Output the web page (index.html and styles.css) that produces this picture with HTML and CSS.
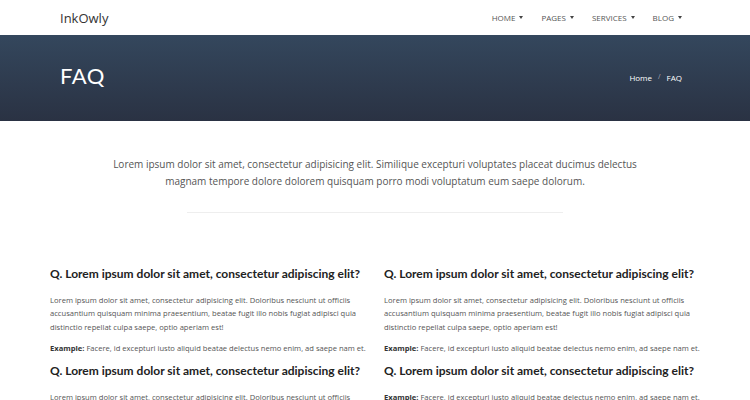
FILE: index.html
```html
<!DOCTYPE html>
<html>
<head>
<meta charset="utf-8">
<link rel="stylesheet" href="styles.css">
</head>
<body>
<header class="navbar">
  <div class="brand">InkOwly</div>
  <nav class="menu">
    <span class="menu-item">HOME <i class="caret"></i></span>
    <span class="menu-item">PAGES <i class="caret"></i></span>
    <span class="menu-item">SERVICES <i class="caret"></i></span>
    <span class="menu-item">BLOG <i class="caret"></i></span>
  </nav>
</header>
<section class="banner">
  <h1 class="banner-title">FAQ</h1>
  <div class="crumbs"><span>Home</span><span class="sep">/</span><span>FAQ</span></div>
</section>
<section class="intro">
  <p class="intro-text">Lorem ipsum dolor sit amet, consectetur adipisicing elit. Similique excepturi voluptates placeat ducimus delectus magnam tempore dolore dolorem quisquam porro modi voluptatum eum saepe dolorum.</p>
  <hr class="divider">
</section>
<section class="faq">
  <div class="col">
    <div class="item">
      <h3 class="q">Q. Lorem ipsum dolor sit amet, consectetur adipiscing elit?</h3>
      <p class="a">Lorem ipsum dolor sit amet, consectetur adipisicing elit. Doloribus nesciunt ut officiis accusantium quisquam minima praesentium, beatae fugit illo nobis fugiat adipisci quia distinctio repellat culpa saepe, optio aperiam est!</p>
      <p class="a"><b>Example:</b> Facere, id excepturi iusto aliquid beatae delectus nemo enim, ad saepe nam et.</p>
    </div>
    <div class="item">
      <h3 class="q">Q. Lorem ipsum dolor sit amet, consectetur adipiscing elit?</h3>
      <p class="a">Lorem ipsum dolor sit amet, consectetur adipisicing elit. Doloribus nesciunt ut officiis accusantium quisquam minima praesentium, beatae fugit illo nobis fugiat adipisci quia distinctio repellat culpa saepe, optio aperiam est!</p>
    </div>
  </div>
  <div class="col">
    <div class="item">
      <h3 class="q">Q. Lorem ipsum dolor sit amet, consectetur adipiscing elit?</h3>
      <p class="a">Lorem ipsum dolor sit amet, consectetur adipisicing elit. Doloribus nesciunt ut officiis accusantium quisquam minima praesentium, beatae fugit illo nobis fugiat adipisci quia distinctio repellat culpa saepe, optio aperiam est!</p>
      <p class="a"><b>Example:</b> Facere, id excepturi iusto aliquid beatae delectus nemo enim, ad saepe nam et.</p>
    </div>
    <div class="item">
      <h3 class="q">Q. Lorem ipsum dolor sit amet, consectetur adipiscing elit?</h3>
      <p class="a"><b>Example:</b> Facere, id excepturi iusto aliquid beatae delectus nemo enim, ad saepe nam et.</p>
    </div>
  </div>
</section>
</body>
</html>
```
FILE: styles.css
```css
* { box-sizing: border-box; }
html, body { margin: 0; padding: 0; }
body {
  font-family: "Open Sans", "Liberation Sans", sans-serif;
  color: #555;
  background: #fff;
  width: 750px;
  overflow: hidden;
}
.navbar {
  height: 35px;
  display: flex;
  align-items: center;
  justify-content: space-between;
  padding: 0 60px 0 60px;
}
.brand {
  font-size: 13px;
  color: #333;
}
.menu {
  display: flex;
  gap: 18px;
  margin-right: 8px;
}
.menu-item {
  font-size: 8px;
  color: #555;
  display: flex;
  align-items: center;
  gap: 4px;
}
.caret {
  display: inline-block;
  width: 0;
  height: 0;
  border-left: 2.5px solid transparent;
  border-right: 2.5px solid transparent;
  border-top: 3px solid #444;
}
.banner {
  height: 86px;
  background: linear-gradient(to bottom, #34475d, #2a3243);
  display: flex;
  align-items: center;
  justify-content: space-between;
  padding: 0 68px 6px 60px;
}
.banner-title {
  margin: 0;
  font-family: "Lato", "Open Sans", sans-serif;
  font-weight: 400;
  font-size: 22px;
  color: #fff;
  letter-spacing: 0.5px;
}
.crumbs {
  font-size: 8px;
  color: #fff;
  display: flex;
  gap: 6px;
  margin-top: 5px;
}
.crumbs .sep { color: #aab; font-size: 7px; }
.intro {
  padding: 35px 0 0;
  text-align: center;
}
.intro-text {
  margin: 0 auto;
  width: 540px;
  font-size: 10px;
  line-height: 17px;
  color: #555;
}
.divider {
  width: 376px;
  margin: 22px auto 0;
  border: 0;
  border-top: 1px solid #eee;
}
.faq {
  display: grid;
  grid-template-columns: 320px 320px;
  column-gap: 14px;
  padding: 53px 0 0 50px;
}
.item { margin-bottom: 2px; }
.q {
  margin: 0 0 13px;
  font-family: "Lato", "Open Sans", sans-serif;
  font-weight: 700;
  font-size: 12px;
  color: #222;
  white-space: nowrap;
}
.a {
  margin: 0 0 8px;
  font-size: 7.6px;
  line-height: 13.3px;
  color: #555;
}
.a b { color: #333; }
```
